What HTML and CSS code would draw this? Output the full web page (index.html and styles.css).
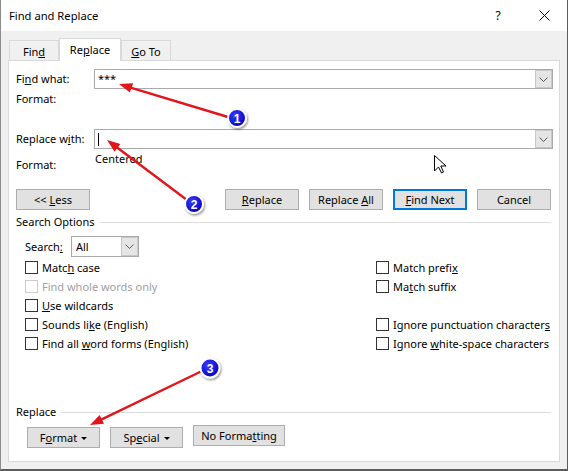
FILE: index.html
```html
<!DOCTYPE html>
<html>
<head>
<meta charset="utf-8">
<link rel="stylesheet" href="styles.css">
</head>
<body>
<div class="window">
  <div class="titlebar">
    <span class="title">Find and Replace</span>
    <span class="tb-btn tb-help">?</span>
    <span class="tb-btn tb-close"><svg width="11" height="11" viewBox="0 0 11 11"><path d="M0.5 0.5 L10.5 10.5 M10.5 0.5 L0.5 10.5" stroke="#000" stroke-width="1" fill="none"/></svg></span>
  </div>
  <div class="tabs">
    <div class="tab">Fin<u>d</u></div>
    <div class="tab active">Re<u>p</u>lace</div>
    <div class="tab tab-last"><u>G</u>o To</div>
  </div>
  <div class="panel">
    <div class="fields fields-find">
      <span class="lbl">Fi<u>n</u>d what:</span>
      <div class="combo"><span class="combo-text">***</span><span class="combo-btn"><svg width="9" height="5" viewBox="0 0 9 5"><path d="M0.5 0.5 L4.5 4.5 L8.5 0.5" fill="none" stroke="#5a5a5a"/></svg></span></div>
      <span class="lbl">Format:</span>
      <span></span>
    </div>
    <div class="fields fields-replace">
      <span class="lbl">Replace w<u>i</u>th:</span>
      <div class="combo"><span class="combo-text"><span class="caret"></span></span><span class="combo-btn"><svg width="9" height="5" viewBox="0 0 9 5"><path d="M0.5 0.5 L4.5 4.5 L8.5 0.5" fill="none" stroke="#5a5a5a"/></svg></span></div>
      <span class="lbl lbl-format2">Format:</span>
      <span class="format-value">Centered</span>
    </div>
    <div class="btn-row">
      <button class="btn">&lt;&lt; <u>L</u>ess</button>
      <span class="spacer"></span>
      <button class="btn"><u>R</u>eplace</button>
      <button class="btn">Replace <u>A</u>ll</button>
      <button class="btn btn-default"><u>F</u>ind Next</button>
      <button class="btn">Cancel</button>
    </div>
    <div class="group-head"><span>Search Options</span><span class="rule"></span></div>
    <div class="search-row">
      <span class="search-lbl">Search<u>:</u></span>
      <div class="select"><span class="select-text">All</span><span class="combo-btn"><svg width="9" height="5" viewBox="0 0 9 5"><path d="M0.5 0.5 L4.5 4.5 L8.5 0.5" fill="none" stroke="#5a5a5a"/></svg></span></div>
    </div>
    <div class="checks">
      <div class="chk"><span class="box"></span><span>Matc<u>h</u> case</span></div>
      <div class="chk"><span class="box"></span><span>Match prefi<u>x</u></span></div>
      <div class="chk disabled"><span class="box"></span><span>Find whole words only</span></div>
      <div class="chk"><span class="box"></span><span>Ma<u>t</u>ch suffix</span></div>
      <div class="chk"><span class="box"></span><span><u>U</u>se wildcards</span></div>
      <div></div>
      <div class="chk"><span class="box"></span><span>Sounds li<u>k</u>e (English)</span></div>
      <div class="chk"><span class="box"></span><span>Ignore punctuation character<u>s</u></span></div>
      <div class="chk"><span class="box"></span><span>Find all <u>w</u>ord forms (English)</span></div>
      <div class="chk"><span class="box"></span><span>Ignore <u>w</u>hite-space characters</span></div>
    </div>
    <div class="group-head group-replace"><span>Replace</span><span class="rule"></span></div>
    <div class="bottom-row">
      <button class="btn btn-menu">F<u>o</u>rmat<span class="tri"></span></button>
      <button class="btn btn-menu">Sp<u>e</u>cial<span class="tri"></span></button>
      <button class="btn btn-nof">No Forma<u>t</u>ting</button>
    </div>
  </div>

  <svg class="overlay" width="568" height="471" viewBox="0 0 568 471">
    <defs>
      <radialGradient id="bl" cx="40%" cy="35%" r="70%">
        <stop offset="0" stop-color="#3b3bff"/>
        <stop offset="1" stop-color="#0000b8"/>
      </radialGradient>
      <filter id="sh" x="-50%" y="-50%" width="200%" height="200%">
        <feDropShadow dx="1" dy="1.5" stdDeviation="1.2" flood-color="#000" flood-opacity="0.45"/>
      </filter>
    </defs>
    <g stroke="#e2151c" stroke-width="2.4" fill="none" stroke-linecap="round">
      <path d="M228 117 L131.4 87.8"/>
      <path d="M187 200 L117.4 147.8"/>
      <path d="M202 371 L101.7 419.4"/>
    </g>
    <g fill="#e2151c">
      <polygon points="119,84 133.2,83.3 129.9,92.5"/>
      <polygon points="107,140 120.4,144 114.6,151.8"/>
      <polygon points="90,425 104,423.8 99.6,415"/>
    </g>
    <g filter="url(#sh)">
      <circle cx="237" cy="118" r="9" fill="url(#bl)" stroke="#fff" stroke-width="2"/>
      <circle cx="194" cy="204" r="9" fill="url(#bl)" stroke="#fff" stroke-width="2"/>
      <circle cx="210" cy="368" r="9.5" fill="url(#bl)" stroke="#fff" stroke-width="2"/>
    </g>
    <g class="num" fill="#fff" text-anchor="middle">
      <text x="237" y="122.5">1</text>
      <text x="194" y="208.5">2</text>
      <text x="210" y="372.5">3</text>
    </g>
    <path d="M434.5 155.5 L434.5 171 L438.5 167 L441.5 173 L443.5 172 L440.8 166 L446 166 Z" fill="#fff" stroke="#000" stroke-width="1" stroke-linejoin="miter"/>
  </svg>
</div>
</body>
</html>
```

FILE: styles.css
```css
html, body {
  margin: 0;
  padding: 0;
  background: #fff;
}

.window {
  position: relative;
  width: 568px;
  height: 471px;
  box-sizing: border-box;
  border-left: 1px solid #8c8c8c;
  border-right: 1px solid #5c5c5c;
  border-bottom: 2px solid #5c5c5c;
  background: #f0f0f0;
  font-family: "Noto Sans", "Open Sans", sans-serif;
  font-size: 11px;
  color: #000;
  overflow: hidden;
}

u {
  text-decoration: underline;
  text-underline-offset: 1px;
}

/* title bar */
.titlebar {
  height: 31px;
  background: #fff;
  display: flex;
  align-items: center;
  padding-left: 8px;
}
.title {
  font-size: 11.2px;
  margin-top: 0;
}
.tb-btn {
  width: 46px;
  height: 31px;
  display: flex;
  align-items: center;
  justify-content: center;
}
.tb-help {
  margin-left: auto;
  font-size: 12px;
  margin-right: 0;
  padding-left: 2px;
}
.tb-close svg {
  display: block;
}

/* tabs */
.tabs {
  height: 29px;
  display: flex;
  align-items: flex-end;
  padding-left: 8px;
}
.tab {
  box-sizing: border-box;
  width: 50px;
  height: 20px;
  border: 1px solid #d9d9d9;
  border-bottom: none;
  display: flex;
  align-items: center;
  justify-content: center;
  padding-top: 2px;
  background: #f0f0f0;
}
.tab.active {
  width: 62px;
  height: 23px;
  background: #fff;
  margin-bottom: -1px;
  position: relative;
  z-index: 1;
  border-left: 1px solid #d9d9d9;
  border-right: 1px solid #d9d9d9;
  padding-top: 0;
  padding-bottom: 1px;
}
.tab-last {
  width: 50px;
}

/* panel */
.panel {
  box-sizing: border-box;
  height: 402px;
  margin: 0 7px;
  border: 1px solid #d9d9d9;
  background: #fff;
  padding: 0 6px 0 7px;
}

.fields {
  display: grid;
  grid-template-columns: 78px 1fr;
}
.fields-find {
  margin-top: 8px;
  grid-template-rows: 20px 20px;
}
.fields-replace {
  margin-top: 20px;
  grid-template-rows: 20px 24px;
}
.lbl {
  align-self: center;
  line-height: 16px;
}
.lbl-format2 {
  align-self: start;
  margin-top: 8px;
}
.format-value {
  align-self: start;
  margin-top: 2px;
  margin-left: 1px;
  line-height: 16px;
}

.combo {
  box-sizing: border-box;
  height: 20px;
  border: 1px solid #a9a9a9;
  display: flex;
  background: #fff;
}
.combo-text {
  flex: 1;
  padding-left: 3px;
  display: flex;
  align-items: center;
  line-height: 16px;
}
.caret {
  display: inline-block;
  width: 1px;
  height: 13px;
  background: #000;
}
.combo-btn {
  box-sizing: border-box;
  width: 17px;
  background: #e5e5e5;
  border: 1px solid #c8c8c8;
  display: flex;
  align-items: center;
  justify-content: center;
}
.combo-btn svg {
  display: block;
}

/* buttons */
.btn {
  box-sizing: border-box;
  width: 74px;
  height: 21px;
  border: 1px solid #adadad;
  background: #e1e1e1;
  font-family: inherit;
  font-size: 11px;
  color: #000;
  padding: 0;
  margin: 0;
  line-height: 16px;
}
.btn-default {
  border: 2px solid #0078d7;
}
.btn-row {
  display: flex;
  gap: 10px;
  margin-top: 16px;
  padding-right: 2px;
}
.spacer {
  flex: 1;
}

.group-head {
  display: flex;
  align-items: center;
  height: 16px;
  margin-top: 4px;
  padding-right: 2px;
  line-height: 16px;
}
.rule {
  flex: 1;
  height: 1px;
  background: #dcdcdc;
  margin-left: 5px;
}
.group-replace {
  margin-top: 51px;
}

.search-row {
  display: flex;
  align-items: center;
  margin-top: 6px;
  padding-left: 9px;
}
.search-lbl {
  width: 46px;
}
.select {
  box-sizing: border-box;
  width: 68px;
  height: 21px;
  border: 1px solid #a9a9a9;
  display: flex;
}
.select-text {
  flex: 1;
  padding-left: 4px;
  display: flex;
  align-items: center;
}

.checks {
  display: grid;
  grid-template-columns: 351px 1fr;
  grid-auto-rows: 19px;
  margin-top: 1px;
  padding-left: 9px;
}
.chk {
  display: flex;
  align-items: center;
  white-space: nowrap;
}
.box {
  box-sizing: border-box;
  width: 13px;
  height: 13px;
  border: 1px solid #333;
  background: #fff;
  margin-right: 4px;
  flex: none;
}
.chk.disabled {
  color: #a0a0a0;
}
.chk.disabled .box {
  border-color: #cccccc;
}

.bottom-row {
  display: flex;
  align-items: flex-start;
  gap: 10px;
  margin-top: 6px;
  padding-left: 11px;
}
.btn-menu {
  width: 73px;
  margin-top: 1px;
}
.btn-nof {
  width: 92px;
  margin-top: -1px;
}
.tri {
  display: inline-block;
  width: 0;
  height: 0;
  border-left: 3px solid transparent;
  border-right: 3px solid transparent;
  border-top: 3px solid #000;
  margin-left: 4px;
  vertical-align: 2px;
}

/* annotations */
.overlay {
  position: absolute;
  left: -1px;
  top: 0;
  pointer-events: none;
}
.num {
  font-family: "Liberation Sans", sans-serif;
  font-weight: bold;
  font-size: 12px;
}
```
